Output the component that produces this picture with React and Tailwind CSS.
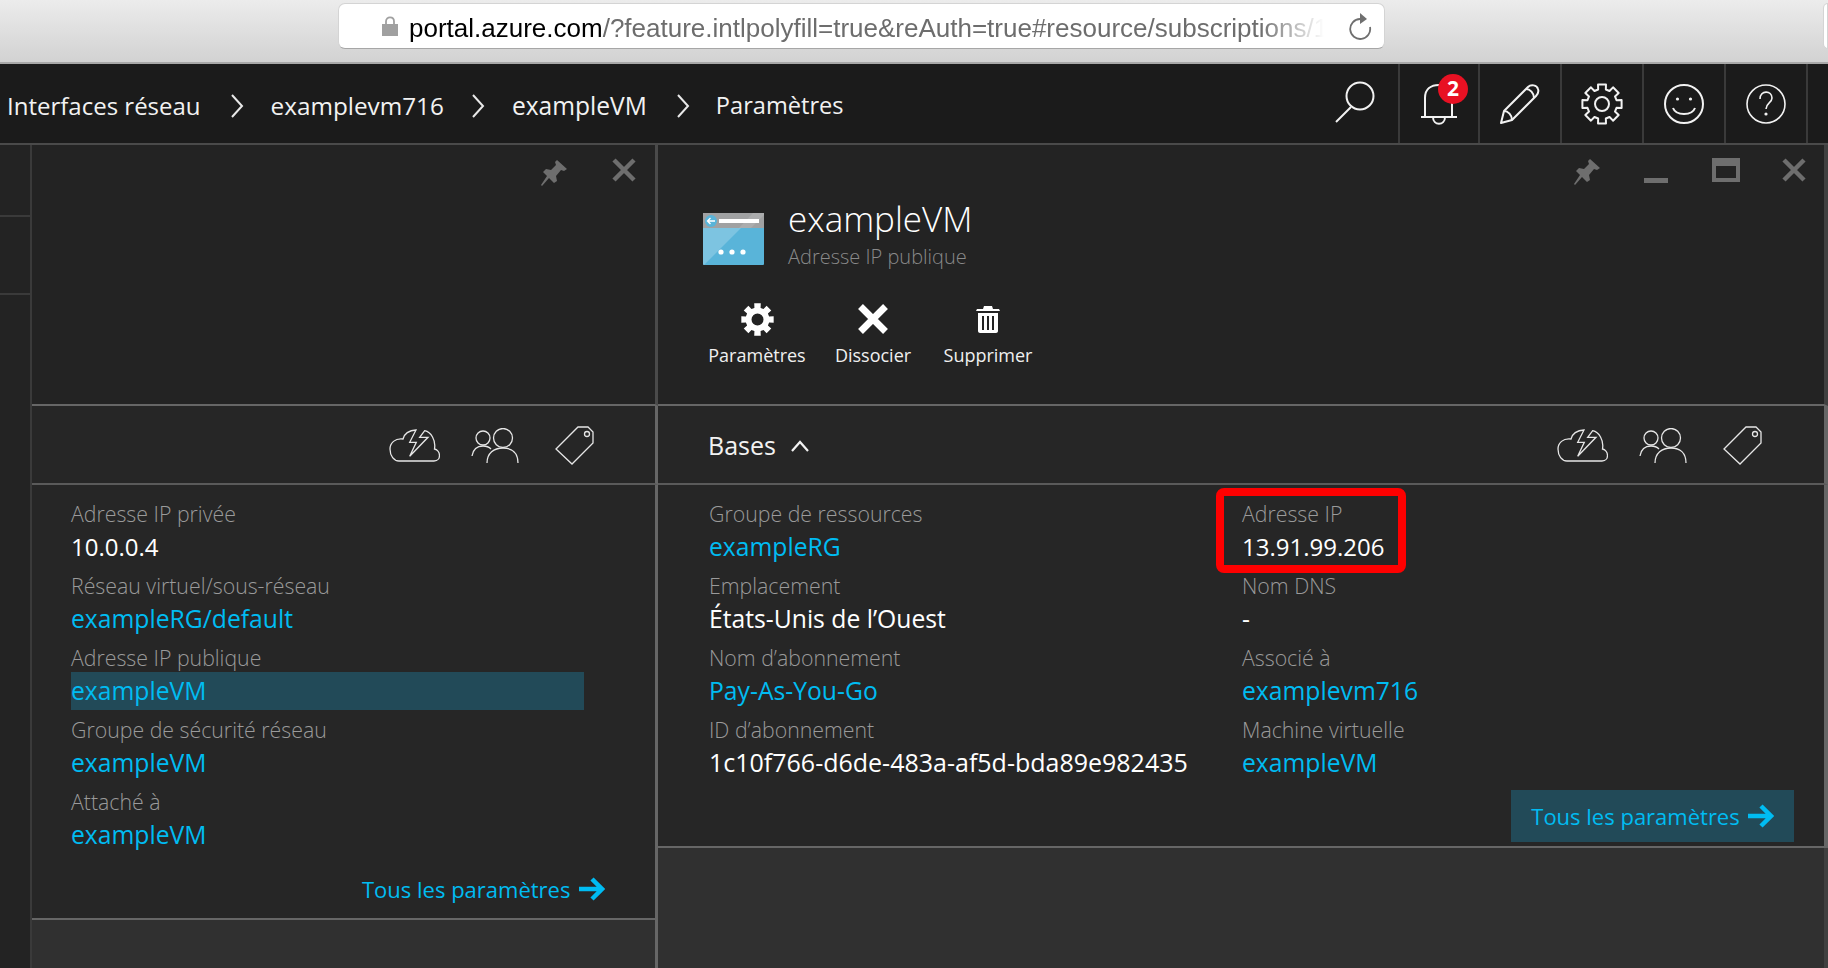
const font = { fontFamily: '"Open Sans", "Noto Sans", sans-serif' };

// outline of an 8 tooth cog, used by the nav bar
function cogPath(cx, cy, outer, inner) {
  const pts = [];
  for (let i = 0; i < 8; i++) {
    const a = (i * Math.PI) / 4 - Math.PI / 2;
    const s = 0.2;
    const g = 0.26;
    pts.push([a - g, inner], [a - s, outer], [a + s, outer], [a + g, inner]);
  }
  return (
    pts
      .map(([a, r], i) => `${i ? "L" : "M"}${(cx + r * Math.cos(a)).toFixed(2)} ${(cy + r * Math.sin(a)).toFixed(2)}`)
      .join(" ") + " Z"
  );
}

function PinIcon({ className }) {
  return (
    <svg viewBox="0 0 28 28" className={className} fill="#6e6e6e">
      <path d="M17 1 L27 10 L24 12 L21 11 L16 17 L17 22 L14 24 L9 19 L2 27 L1 26 L7 17 L3 13 L6 10 L11 11 L16 6 L15 3 Z" />
    </svg>
  );
}

function CloseIcon({ className, color = "#6e6e6e", width = 4.5 }) {
  return (
    <svg viewBox="0 0 24 24" className={className} fill="none" stroke={color} strokeWidth={width}>
      <path d="M2 2 L22 22 M22 2 L2 22" />
    </svg>
  );
}

function CloudIcon() {
  return (
    <svg width="51" height="33" viewBox="0 0 51 33" fill="none" stroke="#e6e6e6" strokeWidth="1.3" className="shrink-0">
      <path d="M27 1 C20 1 15 5 14 10 C6 9 1 14 1 20 C1 27 5 32 10 32 L45 32 C49 32 50.5 29 50.5 26.5 C50.5 23 48 20.5 45.5 20 C47 11 42 3 35.7 1.7 L30.7 8.3 L39 8.3 L20.7 27.3 L27.3 13.3 L20.7 13.3 L27 1 Z" />
    </svg>
  );
}

function PeopleIcon() {
  return (
    <svg width="48" height="35" viewBox="0 0 48 35" fill="none" stroke="#e6e6e6" strokeWidth="1.3" className="shrink-0">
      <circle cx="12" cy="10" r="7" />
      <circle cx="32" cy="10" r="9.5" />
      <path d="M1 28 C2 22 6 18 12 18 C15 18 18 19 20 21" />
      <path d="M16 35 C16 25 23 20 32 20 C41 20 47 25 47 35" />
    </svg>
  );
}

function TagIcon() {
  return (
    <svg width="39" height="39" viewBox="0 0 39 39" fill="none" stroke="#e6e6e6" strokeWidth="1.3" className="shrink-0">
      <path d="M1 23 L23 1 L33 1 L38 6 L38 17 L17 38 Z" />
      <circle cx="32" cy="8" r="2.5" />
    </svg>
  );
}

function BladeIcons() {
  return (
    <div className="flex items-center pt-[2px]">
      <CloudIcon />
      <span className="ml-[31px]"><PeopleIcon /></span>
      <span className="ml-[36px]"><TagIcon /></span>
    </div>
  );
}

function ResourceIcon() {
  return (
    <svg width="61" height="52" viewBox="0 0 61 52" className="shrink-0">
      <rect width="61" height="52" rx="1" fill="#59b4d9" />
      <rect width="61" height="15" fill="#a0a1a2" />
      <path d="M0 52 L0 15 L38 15 L1 52 Z" fill="#fff" opacity="0.22" />
      <path d="M50 0 L61 0 L61 2 L48 15 L36 15 Z" fill="#fff" opacity="0.12" />
      <circle cx="8" cy="8" r="6" fill="#59b4d9" />
      <path d="M12 8 L4.5 8 M7.5 5 L4.5 8 L7.5 11" stroke="#fff" strokeWidth="1.4" fill="none" />
      <rect x="16" y="6" width="40" height="4" fill="#fff" />
      <circle cx="18" cy="39" r="2.6" fill="#fff" />
      <circle cx="29" cy="39" r="2.6" fill="#fff" />
      <circle cx="40" cy="39" r="2.6" fill="#fff" />
    </svg>
  );
}

function NavCell({ children, first }) {
  return (
    <div className={`relative flex h-full w-[82px] items-center justify-center border-r-2 border-[#3a3a3a] ${first ? "border-l-2" : ""}`}>
      {children}
    </div>
  );
}

function Chevron() {
  return (
    <svg width="14" height="24" viewBox="0 0 14 24" fill="none" stroke="#e8e8e8" strokeWidth="2" className="shrink-0">
      <path d="M2 1 L12 12 L2 23" />
    </svg>
  );
}

function Detail({ label, value, link, highlight }) {
  return (
    <div className="mb-[3px]">
      <div className="flex h-[31px] items-center whitespace-nowrap pt-[2px] text-[21.3px] font-light text-[#9a9a9a]">{label}</div>
      <div
        className={`flex h-[38px] items-center whitespace-nowrap text-[24.7px] ${link ? "text-[#00bcf2]" : "text-white"} ${highlight ? "bg-[#224a58]" : ""}`}
      >
        {value}
      </div>
    </div>
  );
}

function ArrowRight() {
  return (
    <svg width="26" height="24" viewBox="0 0 26 24" fill="none" stroke="#00bcf2" strokeWidth="4.5" className="shrink-0">
      <path d="M0 12 L22 12 M13 2 L23 12 L13 22" />
    </svg>
  );
}

function CommandButton({ icon, label, width }) {
  return (
    <div className={`flex flex-col items-center ${width}`}>
      <div className="flex h-[36px] items-center justify-center">{icon}</div>
      <div className="mt-[5px] whitespace-nowrap text-[18px] text-[#f0f0f0]">{label}</div>
    </div>
  );
}

export default function App() {
  return (
    <div className="flex h-screen w-full flex-col overflow-hidden bg-[#1b1b1b] text-white" style={font}>
      {/* safari bar */}
      <div className="relative flex h-[64px] shrink-0 border-b-2 border-[#a8a8a8] bg-gradient-to-b from-[#ececec] to-[#d2d2d2] pt-[3px]">
        <div className="relative ml-[338px] flex h-[46px] w-[1047px] items-center rounded-[7px] border border-[#d4d4d4] border-b-[#a6a6a6] bg-white pl-[43px]">
          <svg width="16" height="20" viewBox="0 0 16 20" className="shrink-0">
            <path d="M4 9 L4 5.5 C4 0 12 0 12 5.5 L12 9" fill="none" stroke="#a0a0a0" strokeWidth="1.8" />
            <rect x="0" y="8" width="16" height="12" fill="#a0a0a0" />
          </svg>
          <div className="ml-[11px] w-[915px] whitespace-nowrap pt-[3px] text-[26px] leading-[32px] text-[#6d6d6d] [font-family:'Liberation_Sans',sans-serif] [mask-image:linear-gradient(to_right,black_93%,transparent_100%)]">
            <span className="text-black">portal.azure.com</span>/?feature.intlpolyfill=true&amp;reAuth=true#resource/subscriptions/1
          </div>
          <svg width="24" height="28" viewBox="0 0 24 28" fill="none" className="absolute right-[11px] top-[8px]">
            <path d="M11 7 A10 10 0 1 0 21 15" stroke="#6f6f6f" strokeWidth="1.8" />
            <path d="M11 1 L18 7 L11 12 Z" fill="#6f6f6f" />
          </svg>
        </div>
        <div className="absolute right-0 top-[3px] h-[46px] w-[5px] rounded-l-[6px] border border-[#d4d4d4] bg-white" />
      </div>

      {/* portal nav */}
      <div className="flex h-[79px] shrink-0 items-center justify-between bg-[#1b1b1b] pl-[7px] pr-[20px]">
        <div className="flex items-center pt-[5px] text-[24px] text-[#f2f2f2]">
          <span>Interfaces réseau</span>
          <span className="ml-[29px] mr-[27px]"><Chevron /></span>
          <span className="text-[24.3px]">examplevm716</span>
          <span className="ml-[27px] mr-[27px]"><Chevron /></span>
          <span className="text-[24.6px]">exampleVM</span>
          <span className="ml-[29px] mr-[26px]"><Chevron /></span>
          <span className="text-[23.6px]">Paramètres</span>
        </div>
        <div className="flex h-full items-center">
          <svg width="42" height="42" viewBox="0 0 42 42" fill="none" stroke="#f2f2f2" strokeWidth="2" className="mb-[4px] mr-[22px]">
            <circle cx="26" cy="15" r="13.5" />
            <path d="M17 26 L2 41" />
          </svg>
          <NavCell first>
            <svg width="36" height="42" viewBox="0 0 36 42" fill="none" stroke="#f2f2f2" strokeWidth="2">
              <path d="M0 34 L36 34 M4 34 L4 15 C4 6 10 2 18 2 C26 2 31 6 31 15 L31 34" />
              <path d="M12 34 C12 43 24 43 24 34" />
            </svg>
            <span className="absolute left-[38px] top-[10px] flex h-[30px] w-[30px] items-center justify-center rounded-full bg-[#e81123] text-[21px] font-bold">
              2
            </span>
          </NavCell>
          <NavCell>
            <svg width="40" height="40" viewBox="0 0 40 40" fill="none" stroke="#f2f2f2" strokeWidth="2" strokeLinejoin="round">
              <path d="M1 39 L4 27 L28 3 C31 0 37 1 38 5 C39 8 38 10 36 12 L12 36 Z" />
              <path d="M4 27 C8 27 12 31 12 36 M26 5 C30 5 34 9 34 14" />
            </svg>
          </NavCell>
          <NavCell>
            <svg width="42" height="42" viewBox="0 0 42 42" fill="none" stroke="#f2f2f2" strokeWidth="2" strokeLinejoin="round">
              <path d={cogPath(21, 21, 20, 15)} />
              <circle cx="21" cy="21" r="7" />
            </svg>
          </NavCell>
          <NavCell>
            <svg width="40" height="40" viewBox="0 0 40 40" fill="none" stroke="#f2f2f2" strokeWidth="2">
              <circle cx="20" cy="20" r="19" />
              <circle cx="13.5" cy="15" r="1.6" fill="#f2f2f2" stroke="none" />
              <circle cx="26.5" cy="15" r="1.6" fill="#f2f2f2" stroke="none" />
              <path d="M9 24 C12 32 28 32 31 24" />
            </svg>
          </NavCell>
          <NavCell>
            <svg width="40" height="40" viewBox="0 0 40 40" fill="none" stroke="#f2f2f2" strokeWidth="1.6">
              <circle cx="20" cy="20" r="19" />
              <path d="M14 15 C14 6 26 6 26 14 C26 19 20 19 20 25" />
              <circle cx="20" cy="30" r="1.6" fill="#f2f2f2" stroke="none" />
            </svg>
          </NavCell>
        </div>
      </div>

      {/* blades */}
      <div className="flex min-h-0 flex-1 border-t-2 border-[#4a4a4a]">
        <div className="flex w-[32px] shrink-0 flex-col border-r-2 border-[#3a3a3a] bg-[#232323]">
          <div className="h-[72px] border-b-2 border-[#3a3a3a]" />
          <div className="h-[78px] border-b-2 border-[#3a3a3a]" />
        </div>

        <div className="flex w-[626px] shrink-0 flex-col bg-[#303030]">
          <div className="flex h-[261px] shrink-0 justify-end border-b-2 border-r-[3px] border-b-[#666666] border-r-[#4a4a4a] bg-[#232323] pr-[19px] pt-[14px]">
            <PinIcon className="mr-[44px] h-[28px] w-[28px]" />
            <CloseIcon className="-mt-[1px] h-[24px] w-[24px]" />
          </div>
          <div className="flex h-[79px] shrink-0 items-center justify-end border-b-2 border-r-[3px] border-b-[#5a5a5a] border-r-[#666666] bg-[#262626] pr-[61px]">
            <BladeIcons />
          </div>
          <div className="flex h-[435px] shrink-0 flex-col border-b-2 border-r-[3px] border-b-[#666666] border-r-[#666666] bg-[#262626] pl-[39px] pt-[12px]">
            <div className="w-[513px]">
              <Detail label="Adresse IP privée" value={<span className="text-[24px]">10.0.0.4</span>} />
              <Detail label="Réseau virtuel/sous-réseau" value="exampleRG/default" link />
              <Detail label="Adresse IP publique" value="exampleVM" link highlight />
              <Detail label="Groupe de sécurité réseau" value="exampleVM" link />
              <Detail label="Attaché à" value="exampleVM" link />
            </div>
            <div className="ml-[291px] mt-[6px] flex h-[52px] items-center gap-[9px] whitespace-nowrap text-[22px] text-[#00bcf2]">
              Tous les paramètres
              <ArrowRight />
            </div>
          </div>
          <div className="min-h-0 flex-1 border-r-[3px] border-r-[#666666]" />
        </div>

        <div className="flex min-w-0 flex-1 flex-col bg-[#303030]">
          <div className="flex h-[261px] shrink-0 flex-col border-b-2 border-r-4 border-b-[#666666] border-r-[#404040] bg-[#232323]">
            <div className="flex h-[68px] justify-end pr-[18px] pt-[13px]">
              <PinIcon className="mr-[43px] h-[28px] w-[28px]" />
              <div className="mr-[44px] mt-[20px] h-[5px] w-[24px] bg-[#6e6e6e]" />
              <div className="mr-[42px] h-[24px] w-[28px] border-[4px] border-t-[8px] border-[#6e6e6e]" />
              <CloseIcon className="h-[24px] w-[24px]" />
            </div>
            <div className="flex items-start pl-[45px]">
              <ResourceIcon />
              <div className="-mt-[14px] ml-[24px]">
                <div className="text-[35px] font-light leading-[40px] text-white">exampleVM</div>
                <div className="mt-[3px] text-[20px] font-light leading-[30px] text-[#8a8a8a]">Adresse IP publique</div>
              </div>
            </div>
            <div className="ml-[41px] mt-[29px] flex">
              <CommandButton
                width="w-[116px]"
                label="Paramètres"
                icon={
                  <svg width="33" height="33" viewBox="0 0 33 33" fill="#ffffff" fillRule="evenodd">
                    <path d={`${cogPath(16.5, 16.5, 16.5, 12)} M16.5 10.5 A6 6 0 1 0 16.5 22.5 A6 6 0 1 0 16.5 10.5 Z`} />
                  </svg>
                }
              />
              <CommandButton width="w-[116px]" label="Dissocier" icon={<CloseIcon className="h-[30px] w-[30px]" color="#ffffff" width="5.5" />} />
              <CommandButton
                width="w-[114px]"
                label="Supprimer"
                icon={
                  <svg width="24" height="27" viewBox="0 0 24 27" fill="#ffffff">
                    <path d="M8 0 L16 0 L17 3 L23 3 L24 5 L0 5 L1 3 L7 3 Z" />
                    <path d="M2 7 L22 7 L22 25 C22 26 21 27 20 27 L4 27 C3 27 2 26 2 25 Z M6 10 L6 24 L8 24 L8 10 Z M11 10 L11 24 L13 24 L13 10 Z M16 10 L16 24 L18 24 L18 10 Z" fillRule="evenodd" />
                  </svg>
                }
              />
            </div>
          </div>

          <div className="flex h-[79px] shrink-0 items-center justify-between border-b-2 border-r-4 border-b-[#5a5a5a] border-r-[#666666] bg-[#262626] pl-[50px] pr-[62px]">
            <div className="flex items-center gap-[14px] pt-[2px] text-[25px] text-[#f2f2f2]">
              Bases
              <svg width="20" height="12" viewBox="0 0 20 12" fill="none" stroke="#f2f2f2" strokeWidth="2.2">
                <path d="M2 11 L10 2 L18 11" />
              </svg>
            </div>
            <BladeIcons />
          </div>

          <div className="relative flex h-[363px] shrink-0 flex-col border-b-2 border-r-4 border-b-[#666666] border-r-[#666666] bg-[#262626] pl-[51px] pt-[12px]">
            <div className="grid grid-cols-[533px_1fr]">
              <div>
                <Detail label="Groupe de ressources" value="exampleRG" link />
                <Detail label="Emplacement" value="États-Unis de l’Ouest" />
                <Detail label="Nom d’abonnement" value="Pay-As-You-Go" link />
                <Detail label="ID d’abonnement" value={<span className="text-[25px]">1c10f766-d6de-483a-af5d-bda89e982435</span>} />
              </div>
              <div>
                <Detail label="Adresse IP" value={<span className="text-[24px]">13.91.99.206</span>} />
                <Detail label="Nom DNS" value="-" />
                <Detail label="Associé à" value="examplevm716" link />
                <Detail label="Machine virtuelle" value="exampleVM" link />
              </div>
            </div>
            <div className="ml-auto mr-[30px] mt-[5px] flex h-[52px] w-[283px] items-center justify-center gap-[8px] bg-[#224a58] text-[22px] text-[#00bcf2]">
              Tous les paramètres
              <ArrowRight />
            </div>
            {/* annotation */}
            <div className="absolute left-[558px] top-[3px] h-[85px] w-[190px] rounded-[8px] border-[8px] border-[#fe0000]" />
          </div>
          <div className="min-h-0 flex-1 border-r-4 border-r-[#404040]" />
        </div>
      </div>
    </div>
  );
}
